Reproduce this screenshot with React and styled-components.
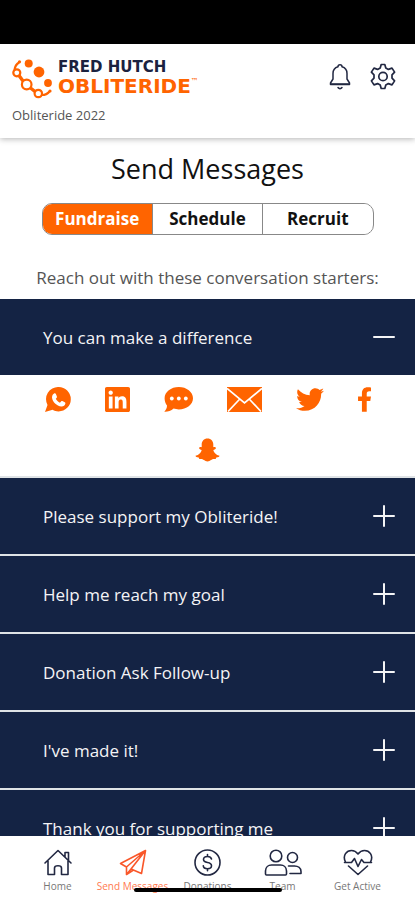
import React, { useState } from "react";
import styled, { createGlobalStyle } from "styled-components";
import { FaLinkedin, FaTwitter, FaFacebookF } from "react-icons/fa";

const orange = "#ff6400";
const navy = "#142344";

const GlobalStyle = createGlobalStyle`
  * { box-sizing: border-box; }
  body { margin: 0; background: #fff; font-family: "Open Sans", "Noto Sans", sans-serif; }
  button { font: inherit; color: inherit; border: 0; padding: 0; background: none; cursor: pointer; }
  svg { display: block; flex: none; }
`;

const Screen = styled.div`
  height: 100vh;
  display: flex;
  flex-direction: column;
  overflow: hidden;
`;

const StatusBar = styled.div`
  flex: none;
  height: 44px;
  background: #000;
`;

const Header = styled.header`
  flex: none;
  display: flex;
  justify-content: space-between;
  align-items: flex-start;
  padding: 14px 19px 13px 12px;
  box-shadow: 0 1px 6px rgba(0, 0, 0, 0.3);
  z-index: 1;
`;

const Brand = styled.div`
  display: flex;
  gap: 5px;
  font-family: "DejaVu Sans", sans-serif;
`;

const BrandText = styled.div`
  display: flex;
  flex-direction: column;
`;

const BrandTop = styled.span`
  font-size: 15px;
  line-height: 18px;
  font-weight: 700;
  color: #1b2240;
`;

const BrandName = styled.span`
  display: flex;
  font-size: 20px;
  line-height: 20px;
  font-weight: 700;
  color: ${orange};
`;

const Trademark = styled.span`
  font-size: 8px;
  line-height: 12px;
  font-weight: 400;
`;

const EventName = styled.div`
  margin-top: 6px;
  font-size: 13px;
  line-height: 20px;
  color: #555;
`;

const HeaderActions = styled.div`
  display: flex;
  gap: 18px;
  padding-top: 5px;
`;

const IconButton = styled.button`
  display: flex;
  color: #222842;
`;

const Main = styled.main`
  flex: 1;
  min-height: 0;
  overflow: hidden;
`;

const Title = styled.h1`
  margin: 12px 0 16px;
  text-align: center;
  font-size: 27px;
  line-height: 37px;
  font-weight: 500;
  color: #111;
`;

const Tabs = styled.div`
  display: flex;
  width: 80%;
  margin: 0 auto;
  border: 1px solid #888;
  border-radius: 10px;
  overflow: hidden;
`;

const Tab = styled.button`
  flex: 1;
  font-size: 17px;
  line-height: 30px;
  font-weight: 700;
  color: ${(p) => (p.$active ? "#fff" : "#111")};
  background: ${(p) => (p.$active ? orange : "#fff")};
  & + & { border-left: 1px solid #888; }
`;

const Intro = styled.p`
  margin: 31px 0 9px;
  text-align: center;
  font-size: 17px;
  line-height: 24px;
  color: #555;
`;

const Item = styled.section`
  border-bottom: 2px solid #dfe3e6;
`;

const ItemHeading = styled.h2`
  margin: 0;
  font-size: 17px;
  font-weight: 400;
`;

const ItemButton = styled.button`
  display: flex;
  width: 100%;
  height: 76px;
  align-items: center;
  justify-content: space-between;
  padding: 0 20px 0 43px;
  background: ${navy};
  color: #f4f4f6;
  text-align: left;
`;

const Shares = styled.div`
  display: flex;
  flex-wrap: wrap;
  justify-content: center;
  gap: 25px 34px;
  padding: 12px 20px 14px;
`;

const ShareButton = styled.button`
  display: flex;
  align-items: center;
  height: 25px;
  color: ${orange};
  svg {
    width: ${(p) => p.$w}px;
    height: ${(p) => p.$h}px;
  }
`;

const BottomNav = styled.nav`
  position: relative;
  flex: none;
  display: flex;
  padding: 13px 20px 7px;
  background: #fff;
`;

const NavLink = styled.a`
  flex: 1;
  display: flex;
  flex-direction: column;
  align-items: center;
  gap: 3px;
  font-size: 10px;
  line-height: 14px;
  white-space: nowrap;
  text-decoration: none;
  color: ${(p) => (p.$active ? "#ff7a50" : "#777")};
  svg { color: ${(p) => (p.$active ? "#f9572a" : "#222842")}; }
`;

const HomeIndicator = styled.div`
  position: absolute;
  left: 50%;
  bottom: 8px;
  width: 148px;
  height: 4px;
  margin-left: -74px;
  border-radius: 2px;
  background: #000;
`;

const Line = ({ children, w = 26, h = 27, sw = 1.6 }) => (
  <svg width={w} height={h} viewBox={`0 0 ${w} ${h}`} fill="none" stroke="currentColor"
    strokeWidth={sw} strokeLinejoin="round" strokeLinecap="round" aria-hidden="true">{children}</svg>
);

const LogoMark = () => (
  <svg width="41" height="41" viewBox="0 0 41 41" fill="none" stroke={orange} strokeWidth="2.2" aria-hidden="true">
    <g fill={orange} stroke="none">
      <circle cx="16.700" cy="5.500" r="4" />
      <circle cx="27" cy="14" r="5.400" />
      <circle cx="36" cy="25" r="3.900" />
      <circle cx="7.500" cy="3.800" r="1.600" />
      <circle cx="38" cy="33" r="1.600" />
    </g>
    <path d="M2.500 12c.5-4 2-6 4.500-7.500M30 37c3.500 0 5.500-1 7.500-3.500" />
    <path strokeWidth="3.400" d="M7 17.500l4 5.500M18.500 30l4.500 3.500" />
    <circle cx="4.800" cy="14.800" r="3.500" />
    <circle cx="14.700" cy="26.500" r="4.800" />
    <circle cx="26.300" cy="35.500" r="3.700" />
  </svg>
);

const Bell = () => (
  <Line w={24} h={27} sw={1.5}>
    <path d="M5 16v-5.500a7 7 0 0 1 5-6.700 2 2 0 0 1 4 0 7 7 0 0 1 5 6.700V16l2.500 4v1.500h-19V20zM10 24.500c1 1.500 3 1.500 4 0" />
    <path d="M3 21h18" />
  </Line>
);

const Gear = () => (
  <Line w={26} h={27} sw={1.7}>
    <path d="M11.200 1.500h3.600l1 3.500 2.600 1.400 3.600-1.300 2.600 4-2.600 2.800v3.200l2.600 2.800-2.600 4-3.600-1.300-2.600 1.400-1 3.500h-3.600l-1-3.500-2.600-1.400L4 21.900l-2.600-4L4 15.100v-3.200L1.400 9.100l2.600-4 3.600 1.300L10.200 5z" />
    <circle cx="13" cy="13.500" r="4.200" />
  </Line>
);

const Toggle = ({ open }) => (
  <Line w={22} h={22} sw={2}>
    <path d={open ? "M1 11h20" : "M1 11h20M11 1v20"} />
  </Line>
);

const WhatsApp = () => (
  <svg viewBox="0 0 26 25" aria-hidden="true">
    <path fill="currentColor" d="M13.500 0A12.200 12.200 0 0 1 25.800 12.200 12.200 12.200 0 0 1 13.500 24.400c-2.200 0-4.200-.6-5.900-1.600L0 25l2.500-7A12.200 12.200 0 0 1 13.500 0z" />
    <path fill="#fff" d="M9.400 6.200c.6-.2 1.100 0 1.400.6l1.100 2.600c.2.500.1.900-.2 1.300l-.9 1.100c.9 1.800 2.300 3.100 4.100 3.900l1.200-1.300c.3-.4.7-.5 1.200-.3l2.500 1.200c.5.300.7.700.6 1.300-.4 2-2 3-4 2.900-4.800-.5-8.900-4.600-9.400-9 .1-2.100 1-3.700 2.400-4.300z" />
  </svg>
);

const Sms = () => (
  <svg viewBox="0 0 29 25" aria-hidden="true">
    <path fill="currentColor" d="M14.800 0C22.600 0 29 4.900 29 11.200s-6.400 11.200-14.200 11.200c-1.900 0-3.600-.3-5.200-.8C7 24 3.500 25 .3 24.800c1.800-1.900 2.700-4 2.700-6.200C1.500 16.600.6 14 .6 11.200.6 4.900 7 0 14.800 0z" />
    <g fill="#fff"><circle cx="7.800" cy="11.500" r="1.900" /><circle cx="14.800" cy="11.500" r="1.900" /><circle cx="21.800" cy="11.500" r="1.900" /></g>
  </svg>
);

const Mail = () => (
  <svg viewBox="0 0 35 25" aria-hidden="true">
    <path fill="currentColor" d="M0 0h35v25H0z" />
    <path fill="none" stroke="#fff" strokeWidth="1.700" d="M0 1.500 17.500 16 35 1.500M1 24.500 12.800 12M34 24.500 22.200 12" />
  </svg>
);

const Ghost = () => (
  <svg viewBox="0 0 25 24" aria-hidden="true">
    <path fill="currentColor" d="M12.500.5c3.600 0 5.800 2.700 5.800 6v2.700c1-.4 2.500-.1 2.600.7.100 1-1.500 1.500-2.600 2.200.6 2.700 2.700 5 6.200 5.700.3.900-1.500 1.500-3.200 1.800l-.6 1.500c-2.200-.4-3.300-.1-4.700 1-1 .8-2.100 1.400-3.500 1.400s-2.500-.6-3.500-1.400c-1.400-1.100-2.500-1.400-4.700-1l-.6-1.500C2 19.300.2 18.700.5 17.800c3.500-.7 5.600-3 6.200-5.700-1.100-.7-2.700-1.200-2.600-2.200.1-.8 1.600-1.100 2.600-.7V6.500c0-3.300 2.200-6 5.800-6z" />
  </svg>
);

const shares = [
  { label: "WhatsApp", w: 26, h: 25, icon: <WhatsApp /> },
  { label: "LinkedIn", w: 25, h: 25, icon: <FaLinkedin viewBox="0 32 448 448" /> },
  { label: "Text message", w: 29, h: 25, icon: <Sms /> },
  { label: "Email", w: 35, h: 25, icon: <Mail /> },
  { label: "Twitter", w: 28, h: 23, icon: <FaTwitter viewBox="0 48 512 416" /> },
  { label: "Facebook", w: 13, h: 25, icon: <FaFacebookF viewBox="22 0 272 512" /> },
  { label: "Snapchat", w: 25, h: 24, icon: <Ghost /> },
];

const starters = [
  "You can make a difference",
  "Please support my Obliteride!",
  "Help me reach my goal",
  "Donation Ask Follow-up",
  "I've made it!",
  "Thank you for supporting me",
];

const navItems = [
  ["Home", <Line w={30} h={27} key="h"><path d="M2 14 15 1.500 28 14M22 8V3.500h3.500V11.500M5 12v13.500h6.500V19c0-3 7-3 7 0v6.500H25V12" /></Line>],
  ["Send Messages", <Line w={28} h={27} key="s"><path d="M26.500 1.500 1.500 14.500l6 3.500zM26.500 1.500 12 20l10.500 4.500zM7.500 18v7.500L12 20M7.500 25.500l7-4.500" /></Line>],
  ["Donations", <Line w={27} h={27} key="d"><circle cx="13.500" cy="13.500" r="12.500" /><path d="M17.500 10c-.5-1.800-2-2.500-4-2.500-2.300 0-4 1-4 3s1.700 2.600 4 3 4 1.200 4 3.200-1.700 3-4 3-4-.9-4.200-2.800M13.500 5.500v2M13.500 19.700v2" /></Line>],
  ["Team", <Line w={38} h={27} key="t"><circle cx="12" cy="7" r="5.800" /><circle cx="28.500" cy="8.500" r="5" /><path d="M1.500 25v-3c0-4 3-6 6-6h9c3 0 6 2 6 6v3c0 .5-.5 1-1 1h-19c-.5 0-1-.5-1-1zM24.500 17h6c3.500 0 6.500 2 6.500 5.500V24.500H26" /></Line>],
  ["Get Active", <Line w={30} h={27} key="g"><path d="M2.500 13C-1 6 4 1.500 8.500 1.500c3 0 5 1.500 6.500 3.500 1.500-2 3.500-3.500 6.500-3.500C26 1.500 31 6 27.500 13M5.500 17 15 25.500 24.500 17M1.500 13.500h7l3-4 3.500 8 3.500-7 2.500 3h7.500" /></Line>],
];

export default function App() {
  const [tab, setTab] = useState("Fundraise");
  const [open, setOpen] = useState(0);
  return (
    <Screen>
      <GlobalStyle />
      <StatusBar />
      <Header>
        <div>
          <Brand>
            <LogoMark />
            <BrandText>
              <BrandTop>FRED HUTCH</BrandTop>
              <BrandName>OBLITERIDE<Trademark>™</Trademark></BrandName>
            </BrandText>
          </Brand>
          <EventName>Obliteride 2022</EventName>
        </div>
        <HeaderActions>
          <IconButton aria-label="Notifications"><Bell /></IconButton>
          <IconButton aria-label="Settings"><Gear /></IconButton>
        </HeaderActions>
      </Header>
      <Main>
        <Title>Send Messages</Title>
        <Tabs>
          {["Fundraise", "Schedule", "Recruit"].map((t) => (
            <Tab key={t} $active={t === tab} aria-pressed={t === tab} onClick={() => setTab(t)}>{t}</Tab>
          ))}
        </Tabs>
        <Intro>Reach out with these conversation starters:</Intro>
        {starters.map((s, i) => (
          <Item key={s}>
            <ItemHeading>
              <ItemButton aria-expanded={open === i} onClick={() => setOpen(open === i ? -1 : i)}>
                {s}
                <Toggle open={open === i} />
              </ItemButton>
            </ItemHeading>
            {open === i && (
              <Shares>
                {shares.map(({ label, w, h, icon }) => (
                  <ShareButton key={label} aria-label={label} $w={w} $h={h}>{icon}</ShareButton>
                ))}
              </Shares>
            )}
          </Item>
        ))}
      </Main>
      <BottomNav>
        {navItems.map(([label, icon]) => (
          <NavLink key={label} href="#" $active={label === "Send Messages"}>
            {icon}
            {label}
          </NavLink>
        ))}
        <HomeIndicator />
      </BottomNav>
    </Screen>
  );
}
